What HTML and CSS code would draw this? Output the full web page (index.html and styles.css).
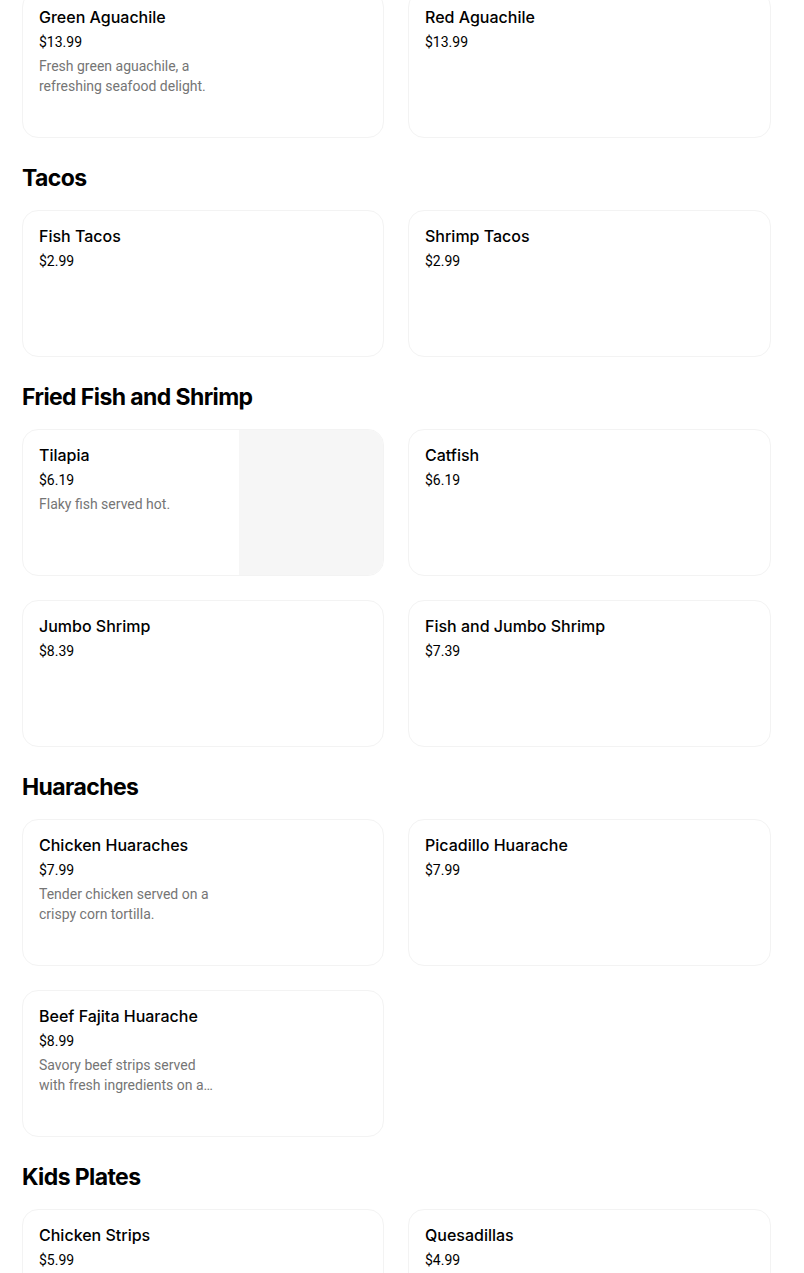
FILE: index.html
```html
<!DOCTYPE html>
<html lang="en">
<head>
<meta charset="utf-8">
<title>Menu</title>
<link rel="stylesheet" href="styles.css">
</head>
<body>
<main class="menu">
  <section class="section first">
    <div class="grid">
      <div class="card">
        <div class="info">
          <div class="name">Green Aguachile</div>
          <div class="price">$13.99</div>
          <div class="desc">Fresh green aguachile, a refreshing seafood delight.</div>
        </div>
      </div>
      <div class="card">
        <div class="info">
          <div class="name">Red Aguachile</div>
          <div class="price">$13.99</div>
        </div>
      </div>
    </div>
  </section>

  <section class="section">
    <h2 class="heading">Tacos</h2>
    <div class="grid">
      <div class="card">
        <div class="info">
          <div class="name">Fish Tacos</div>
          <div class="price">$2.99</div>
        </div>
      </div>
      <div class="card">
        <div class="info">
          <div class="name">Shrimp Tacos</div>
          <div class="price">$2.99</div>
        </div>
      </div>
    </div>
  </section>

  <section class="section">
    <h2 class="heading">Fried Fish and Shrimp</h2>
    <div class="grid">
      <div class="card">
        <div class="info">
          <div class="name">Tilapia</div>
          <div class="price">$6.19</div>
          <div class="desc">Flaky fish served hot.</div>
        </div>
        <div class="photo"></div>
      </div>
      <div class="card">
        <div class="info">
          <div class="name">Catfish</div>
          <div class="price">$6.19</div>
        </div>
      </div>
      <div class="card">
        <div class="info">
          <div class="name">Jumbo Shrimp</div>
          <div class="price">$8.39</div>
        </div>
      </div>
      <div class="card">
        <div class="info">
          <div class="name">Fish and Jumbo Shrimp</div>
          <div class="price">$7.39</div>
        </div>
      </div>
    </div>
  </section>

  <section class="section">
    <h2 class="heading">Huaraches</h2>
    <div class="grid">
      <div class="card">
        <div class="info">
          <div class="name">Chicken Huaraches</div>
          <div class="price">$7.99</div>
          <div class="desc">Tender chicken served on a crispy corn tortilla.</div>
        </div>
      </div>
      <div class="card">
        <div class="info">
          <div class="name">Picadillo Huarache</div>
          <div class="price">$7.99</div>
        </div>
      </div>
      <div class="card">
        <div class="info">
          <div class="name">Beef Fajita Huarache</div>
          <div class="price">$8.99</div>
          <div class="desc">Savory beef strips served with fresh ingredients on a crispy corn tortilla.</div>
        </div>
      </div>
    </div>
  </section>

  <section class="section">
    <h2 class="heading">Kids Plates</h2>
    <div class="grid">
      <div class="card">
        <div class="info">
          <div class="name">Chicken Strips</div>
          <div class="price">$5.99</div>
        </div>
      </div>
      <div class="card">
        <div class="info">
          <div class="name">Quesadillas</div>
          <div class="price">$4.99</div>
        </div>
      </div>
    </div>
  </section>
</main>
</body>
</html>
```

FILE: styles.css
```css
* {
  box-sizing: border-box;
}

html, body {
  margin: 0;
  padding: 0;
  background: #ffffff;
}

body {
  font-family: Roboto, "Liberation Sans", Arial, sans-serif;
  color: #000000;
  overflow: hidden;
}

.menu {
  width: 749px;
  margin: -9px 0 0 22px;
}

.section {
  margin-top: 24px;
}

.section.first {
  margin-top: 0;
}

.heading {
  margin: 0 0 16px 0;
  font-family: Inter, Roboto, sans-serif;
  font-size: 23px;
  line-height: 32px;
  font-weight: 700;
  letter-spacing: -0.6px;
  color: #000000;
}

.grid {
  display: grid;
  grid-template-columns: 362px 363px;
  column-gap: 24px;
  row-gap: 24px;
}

.card {
  height: 147px;
  border: 1px solid #f3f3f3;
  border-radius: 16px;
  overflow: hidden;
  display: flex;
  background: #ffffff;
}

.info {
  width: 216px;
  flex: 0 0 216px;
  padding: 15px 16px 16px 16px;
}

.photo {
  flex: 1 1 auto;
  background: #f6f6f6;
}

.name {
  font-family: Inter, Roboto, sans-serif;
  font-size: 16px;
  line-height: 20px;
  font-weight: 500;
  color: #000000;
  margin-bottom: 5px;
}

.price {
  font-size: 14px;
  line-height: 20px;
  color: #000000;
  margin-bottom: 4px;
}

.desc {
  font-size: 14px;
  line-height: 20px;
  color: #757575;
  display: -webkit-box;
  -webkit-line-clamp: 2;
  -webkit-box-orient: vertical;
  overflow: hidden;
}
```
